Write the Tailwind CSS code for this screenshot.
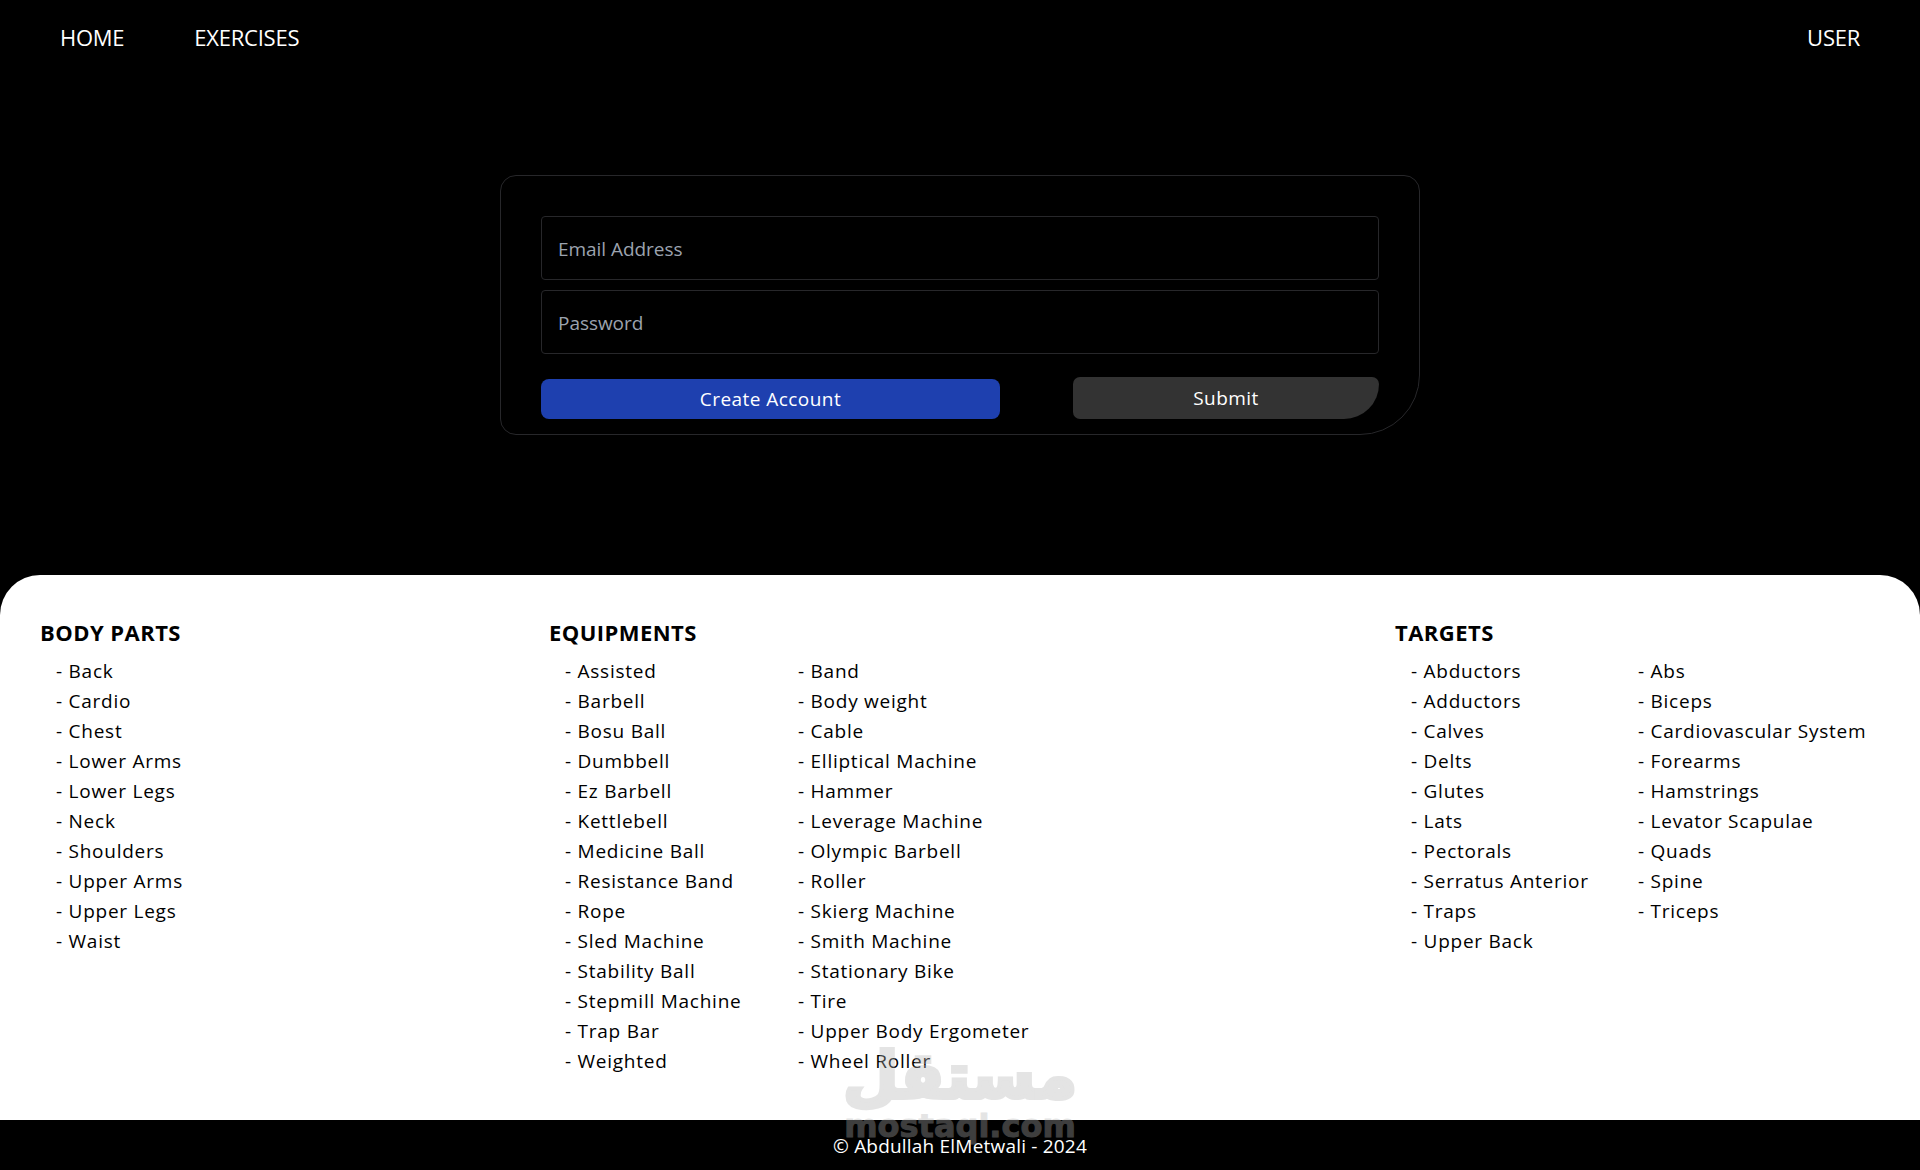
<!DOCTYPE html>
<html lang="en">
<head>
<meta charset="utf-8">
<title>Login</title>
<script src="https://cdn.jsdelivr.net/npm/@tailwindcss/browser@4"></script>
</head>
<body class="relative h-[1170px] overflow-hidden bg-black font-['Open_Sans',sans-serif] text-white">
<nav class="flex h-[75px] items-center justify-between pl-[60px] pr-[60px] text-[22px] tracking-[-0.25px]">
  <div class="flex gap-[70px]"><a>HOME</a><a>EXERCISES</a></div>
  <a>USER</a>
</nav>
<main class="flex h-[500px] justify-center pt-[100px]">
  <form class="h-[260px] w-[920px] rounded-t-2xl rounded-bl-2xl rounded-br-[60px] border border-[#27272a] px-10 pt-10">
    <div class="flex h-[64px] items-center rounded border border-[#27272a] px-4 pt-[2px] text-[19px] tracking-[-0.05px] text-[#9ca3af]">Email Address</div>
    <div class="mt-[10px] flex h-[64px] items-center rounded border border-[#27272a] px-4 pt-[2px] text-[19px] tracking-[-0.05px] text-[#9ca3af]">Password</div>
    <div class="mt-[23px] flex items-end justify-between">
      <button class="h-[40px] w-[459px] rounded-lg bg-[#1e40af] text-[19px] tracking-[0.45px]">Create Account</button>
      <button class="h-[42px] w-[306px] rounded-t-lg rounded-bl-lg rounded-br-[40px] bg-[#333333] text-[19px] tracking-[0.45px]">Submit</button>
    </div>
  </form>
</main>
<section class="flex h-[545px] rounded-t-[40px] bg-white pl-[40px] pt-[39px] text-[19px] text-black tracking-[0.75px]">
  <div class="w-[509px]">
    <h2 class="h-[42px] text-[22px] font-bold leading-[36px] tracking-[0.45px]">BODY PARTS</h2>
    <ul class="pl-4 leading-[30px]">
      <li>- Back</li><li>- Cardio</li><li>- Chest</li><li>- Lower Arms</li><li>- Lower Legs</li><li>- Neck</li><li>- Shoulders</li><li>- Upper Arms</li><li>- Upper Legs</li><li>- Waist</li>
    </ul>
  </div>
  <div class="w-[846px]">
    <h2 class="h-[42px] text-[22px] font-bold leading-[36px] tracking-[0.45px]">EQUIPMENTS</h2>
    <div class="flex pl-4 leading-[30px]">
      <ul class="w-[233px]">
        <li>- Assisted</li><li>- Barbell</li><li>- Bosu Ball</li><li>- Dumbbell</li><li>- Ez Barbell</li><li>- Kettlebell</li><li>- Medicine Ball</li><li>- Resistance Band</li><li>- Rope</li><li>- Sled Machine</li><li>- Stability Ball</li><li>- Stepmill Machine</li><li>- Trap Bar</li><li>- Weighted</li>
      </ul>
      <ul>
        <li>- Band</li><li>- Body weight</li><li>- Cable</li><li>- Elliptical Machine</li><li>- Hammer</li><li>- Leverage Machine</li><li>- Olympic Barbell</li><li>- Roller</li><li>- Skierg Machine</li><li>- Smith Machine</li><li>- Stationary Bike</li><li>- Tire</li><li>- Upper Body Ergometer</li><li>- Wheel Roller</li>
      </ul>
    </div>
  </div>
  <div>
    <h2 class="h-[42px] text-[22px] font-bold leading-[36px] tracking-[0.45px]">TARGETS</h2>
    <div class="flex pl-4 leading-[30px]">
      <ul class="w-[227px]">
        <li>- Abductors</li><li>- Adductors</li><li>- Calves</li><li>- Delts</li><li>- Glutes</li><li>- Lats</li><li>- Pectorals</li><li>- Serratus Anterior</li><li>- Traps</li><li>- Upper Back</li>
      </ul>
      <ul>
        <li>- Abs</li><li>- Biceps</li><li>- Cardiovascular System</li><li>- Forearms</li><li>- Hamstrings</li><li>- Levator Scapulae</li><li>- Quads</li><li>- Spine</li><li>- Triceps</li>
      </ul>
    </div>
  </div>
</section>
<footer class="flex h-[50px] items-center justify-center rounded-t-[32px] bg-black pt-[2px] text-[19px] tracking-[0.2px]">© Abdullah ElMetwali - 2024</footer>
<div class="pointer-events-none absolute left-[845px] top-[1024px] flex w-[230px] flex-col items-center font-['DejaVu_Sans',sans-serif] font-bold text-[#b3b3b3] opacity-35">
  <div class="h-[84px] text-[64px] leading-[104px] [-webkit-text-stroke:4px_#b3b3b3]" dir="rtl" lang="ar">مستقل</div>
  <div class="text-[32px] leading-[36px] [-webkit-text-stroke:1px_#b3b3b3]">mostaql.com</div>
</div>
</body>
</html>
